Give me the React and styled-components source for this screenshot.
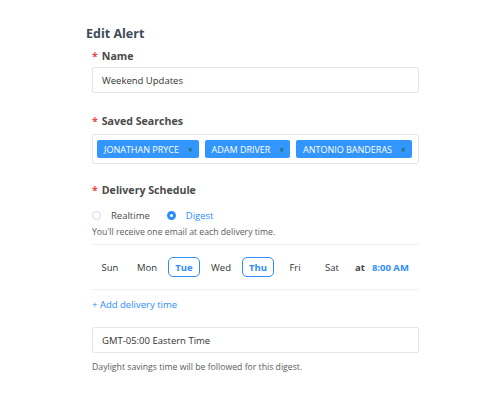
import React from 'react';
import styled, { createGlobalStyle } from 'styled-components';

const GlobalStyle = createGlobalStyle`
  body {
    margin: 0;
    background: #ffffff;
    font-family: "Open Sans", "Liberation Sans", sans-serif;
    color: #393939;
  }
`;

const Page = styled.div`
  width: 500px;
  height: 400px;
  padding: 25px 0 0 86px;
  box-sizing: border-box;
`;

const Title = styled.h1`
  margin: 0;
  font-size: 12.5px;
  line-height: 18px;
  font-weight: 700;
  color: #3e4a59;
`;

const Form = styled.div`
  margin-left: 6px;
  width: 327px;
`;

const Label = styled.div`
  font-size: 10.6px;
  line-height: 16px;
  font-weight: 700;
  color: #4a4a4a;
  margin-top: ${(p) => p.$top}px;
`;

const Star = styled.span`
  color: #e8474c;
  margin-right: 4px;
`;

const Input = styled.div`
  height: 26px;
  border: 1px solid #e3e6eb;
  border-radius: 2px;
  box-sizing: border-box;
  display: flex;
  align-items: center;
  padding-left: 9px;
  font-size: 9.5px;
  color: #333;
  margin-top: ${(p) => p.$top}px;
`;

const TagBox = styled.div`
  height: 30px;
  border: 1px solid #e3e6eb;
  border-radius: 2px;
  box-sizing: border-box;
  display: flex;
  align-items: center;
  gap: 6px;
  padding-left: 4px;
  margin-top: 5px;
  overflow: hidden;
`;

const Tag = styled.div`
  height: 18px;
  background: #3396ff;
  border-radius: 2px;
  color: #ffffff;
  font-size: 9px;
  white-space: nowrap;
  flex-shrink: 0;
  display: flex;
  align-items: center;
  padding: 0 6px 0 7px;
  gap: 9px;
`;

const Close = styled.span`
  color: #1f6b4a;
  font-size: 8px;
  font-weight: 700;
`;

const RadioRow = styled.div`
  display: flex;
  align-items: center;
  margin-top: 9px;
  height: 16px;
`;

const Radio = styled.label`
  display: flex;
  align-items: center;
  gap: 10px;
  font-size: 9.5px;
  color: ${(p) => (p.$checked ? '#2d8cff' : '#4a4a4a')};
  margin-right: 17px;
`;

const Dot = styled.span`
  width: 9px;
  height: 9px;
  border-radius: 50%;
  box-sizing: border-box;
  border: ${(p) => (p.$checked ? '3px solid #2d8cff' : '1px solid #d4d8de')};
  background: #fff;
`;

const Hint = styled.div`
  font-size: 8.7px;
  line-height: 12px;
  color: #5a5a5a;
  margin-top: ${(p) => p.$top}px;
`;

const DaysRow = styled.div`
  margin-top: 6px;
  border-top: 1px solid #edf0f3;
  border-bottom: 1px solid #edf0f3;
  height: 46px;
  box-sizing: border-box;
  display: flex;
  align-items: center;
  padding-left: 2px;
  white-space: nowrap;
`;

const Day = styled.div`
  width: 32px;
  height: 20px;
  box-sizing: border-box;
  display: flex;
  align-items: center;
  justify-content: center;
  font-size: 9.5px;
  border-radius: 5px;
  margin-right: 5px;
  border: 1px solid ${(p) => (p.$on ? '#2d8cff' : 'transparent')};
  color: ${(p) => (p.$on ? '#2d8cff' : '#333')};
  font-weight: ${(p) => (p.$on ? 700 : 400)};
`;

const At = styled.span`
  font-size: 9.5px;
  font-weight: 700;
  color: #444;
  margin-left: 2px;
`;

const Time = styled.span`
  font-size: 9.5px;
  font-weight: 700;
  color: #2d8cff;
  margin-left: 7px;
`;

const AddLink = styled.div`
  margin-top: 8px;
  font-size: 9.5px;
  color: #2d8cff;
  line-height: 14px;
`;

const days = [
  ['Sun', false],
  ['Mon', false],
  ['Tue', true],
  ['Wed', false],
  ['Thu', true],
  ['Fri', false],
  ['Sat', false],
];

export default function App() {
  return (
    <>
      <GlobalStyle />
      <Page>
        <Title>Edit Alert</Title>
        <Form>
          <Label $top={5}><Star>*</Star>Name</Label>
          <Input $top={3}>Weekend Updates</Input>

          <Label $top={20}><Star>*</Star>Saved Searches</Label>
          <TagBox>
            <Tag>JONATHAN PRYCE<Close>×</Close></Tag>
            <Tag>ADAM DRIVER<Close>×</Close></Tag>
            <Tag>ANTONIO BANDERAS<Close>×</Close></Tag>
          </TagBox>

          <Label $top={18}><Star>*</Star>Delivery Schedule</Label>
          <RadioRow>
            <Radio><Dot />Realtime</Radio>
            <Radio $checked><Dot $checked />Digest</Radio>
          </RadioRow>
          <Hint $top={3}>You'll receive one email at each delivery time.</Hint>

          <DaysRow>
            {days.map(([d, on]) => (
              <Day key={d} $on={on}>{d}</Day>
            ))}
            <At>at</At>
            <Time>8:00 AM</Time>
          </DaysRow>
          <AddLink>+ Add delivery time</AddLink>

          <Input $top={15}>GMT-05:00 Eastern Time</Input>
          <Hint $top={8}>Daylight savings time will be followed for this digest.</Hint>
        </Form>
      </Page>
    </>
  );
}
